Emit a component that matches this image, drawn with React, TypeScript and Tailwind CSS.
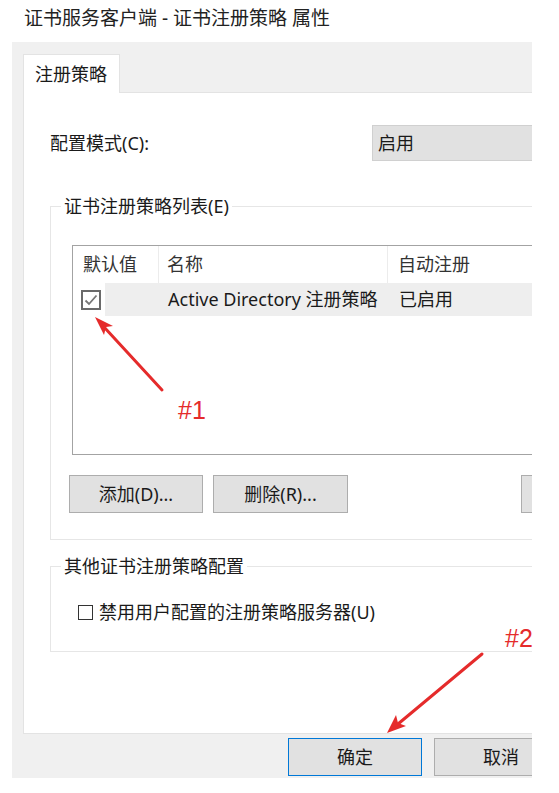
import React from "react";

const btn =
  "shrink-0 h-[38px] bg-[#e1e1e1] border border-[#adadad] flex items-center justify-center text-[18px] text-[#1a1a1a]";

export default function App() {
  return (
    <div className="relative w-[559px] h-[793px] bg-white overflow-hidden font-['Noto_Sans','Noto_Sans_CJK_SC',sans-serif] text-[#1a1a1a]">
      {/* window title */}
      <div className="h-[42px] pl-[24px] pt-[6px] text-[19px] leading-[24px] text-[#222]">
        证书服务客户端 - 证书注册策略 属性
      </div>

      {/* dialog body */}
      <div className="ml-[12px] w-[520px] h-[736px] bg-[#f0f0f0] overflow-hidden pl-[11px] pt-[12px]">
        <div className="relative z-10 w-[97px] h-[39px] -mb-px bg-white border border-b-0 border-[#e3e3e3] flex items-center pl-[11px] text-[18px]">
          注册策略
        </div>

        <div className="w-[620px] h-[642px] bg-white border border-[#e3e3e3]">
          {/* config mode */}
          <div className="mt-[32px] ml-[26px] h-[36px] flex items-center text-[18px]">
            <div className="shrink-0 w-[322px]">配置模式(C):</div>
            <div className="shrink-0 w-[220px] h-[36px] bg-[#e1e1e1] border border-[#d0d0d0] flex items-center pl-[5px]">
              启用
            </div>
          </div>

          {/* policy list group */}
          <fieldset className="mt-[33px] ml-[26px] w-[560px] h-[346px] border border-[#e6e6e6]">
            <legend className="ml-[10px] px-[3px] text-[18px] leading-[24px]">证书注册策略列表(E)</legend>

            <div className="mt-[27px] ml-[21px] w-[520px] h-[210px] border border-[#a3a3a3] text-[18px]">
              <div className="flex h-[37px] items-center text-[#333]">
                <div className="shrink-0 w-[86px] h-full flex items-center pl-[10px] border-r border-[#ececec]">默认值</div>
                <div className="shrink-0 w-[229px] h-full flex items-center pl-[8px] border-r border-[#ececec]">名称</div>
                <div className="flex-1 h-full flex items-center pl-[10px]">自动注册</div>
              </div>
              <div className="flex h-[33px] items-center">
                <div className="shrink-0 w-[32px] flex items-center pl-[8px]">
                  <div className="w-[20px] h-[20px] border-2 border-[#6a6a6a] flex items-center justify-center">
                    <svg width="14" height="12" viewBox="0 0 14 12">
                      <path d="M1.5 6.5 L5 10 L12.5 1.5" fill="none" stroke="#777" strokeWidth="1.8" />
                    </svg>
                  </div>
                </div>
                <div className="flex-1 h-full bg-[#eeeeee] flex items-center">
                  <div className="shrink-0 w-[284px] pl-[63px]">Active Directory 注册策略</div>
                  <div className="pl-[10px]">已启用</div>
                </div>
              </div>
            </div>

            <div className="mt-[20px] ml-[18px] flex">
              <div className={btn + " w-[134px]"}>添加(D)...</div>
              <div className={btn + " w-[135px] ml-[10px]"}>删除(R)...</div>
              <div className={btn + " w-[134px] ml-[173px]"}></div>
            </div>
          </fieldset>

          {/* other settings group */}
          <fieldset className="mt-[14px] ml-[26px] w-[560px] h-[98px] border border-[#e6e6e6]">
            <legend className="ml-[10px] px-[3px] text-[18px] leading-[24px]">其他证书注册策略配置</legend>
            <div className="mt-[22px] ml-[27px] flex items-center h-[24px] text-[18px]">
              <div className="shrink-0 w-[15px] h-[15px] border border-[#333] mr-[6px]"></div>
              <span>禁用用户配置的注册策略服务器(U)</span>
            </div>
          </fieldset>
        </div>

        {/* OK / Cancel */}
        <div className="mt-[4px] ml-[265px] flex">
          <div className={btn + " w-[134px] !border-[#0078d7]"}>确定</div>
          <div className={btn + " w-[134px] ml-[12px]"}>取消</div>
        </div>
      </div>

      {/* red annotations */}
      <svg className="absolute left-0 top-0 pointer-events-none" width="559" height="793" viewBox="0 0 559 793">
        <line x1="162" y1="390" x2="104" y2="327" stroke="#e52b2b" strokeWidth="3" strokeLinecap="round" />
        <polygon points="95,317 113,326 106,327 104,335" fill="#e52b2b" />
        <line x1="482" y1="654" x2="398" y2="724" stroke="#e52b2b" strokeWidth="3" strokeLinecap="round" />
        <polygon points="387,733 396,715 398,723 406,726" fill="#e52b2b" />
      </svg>
      <div className="absolute left-[178px] top-[398px] text-[25px] leading-[25px] font-['Liberation_Sans',sans-serif] text-[#e52b2b]">
        #1
      </div>
      <div className="absolute left-[505px] top-[626px] text-[25px] leading-[25px] font-['Liberation_Sans',sans-serif] text-[#e52b2b]">
        #2
      </div>
    </div>
  );
}
